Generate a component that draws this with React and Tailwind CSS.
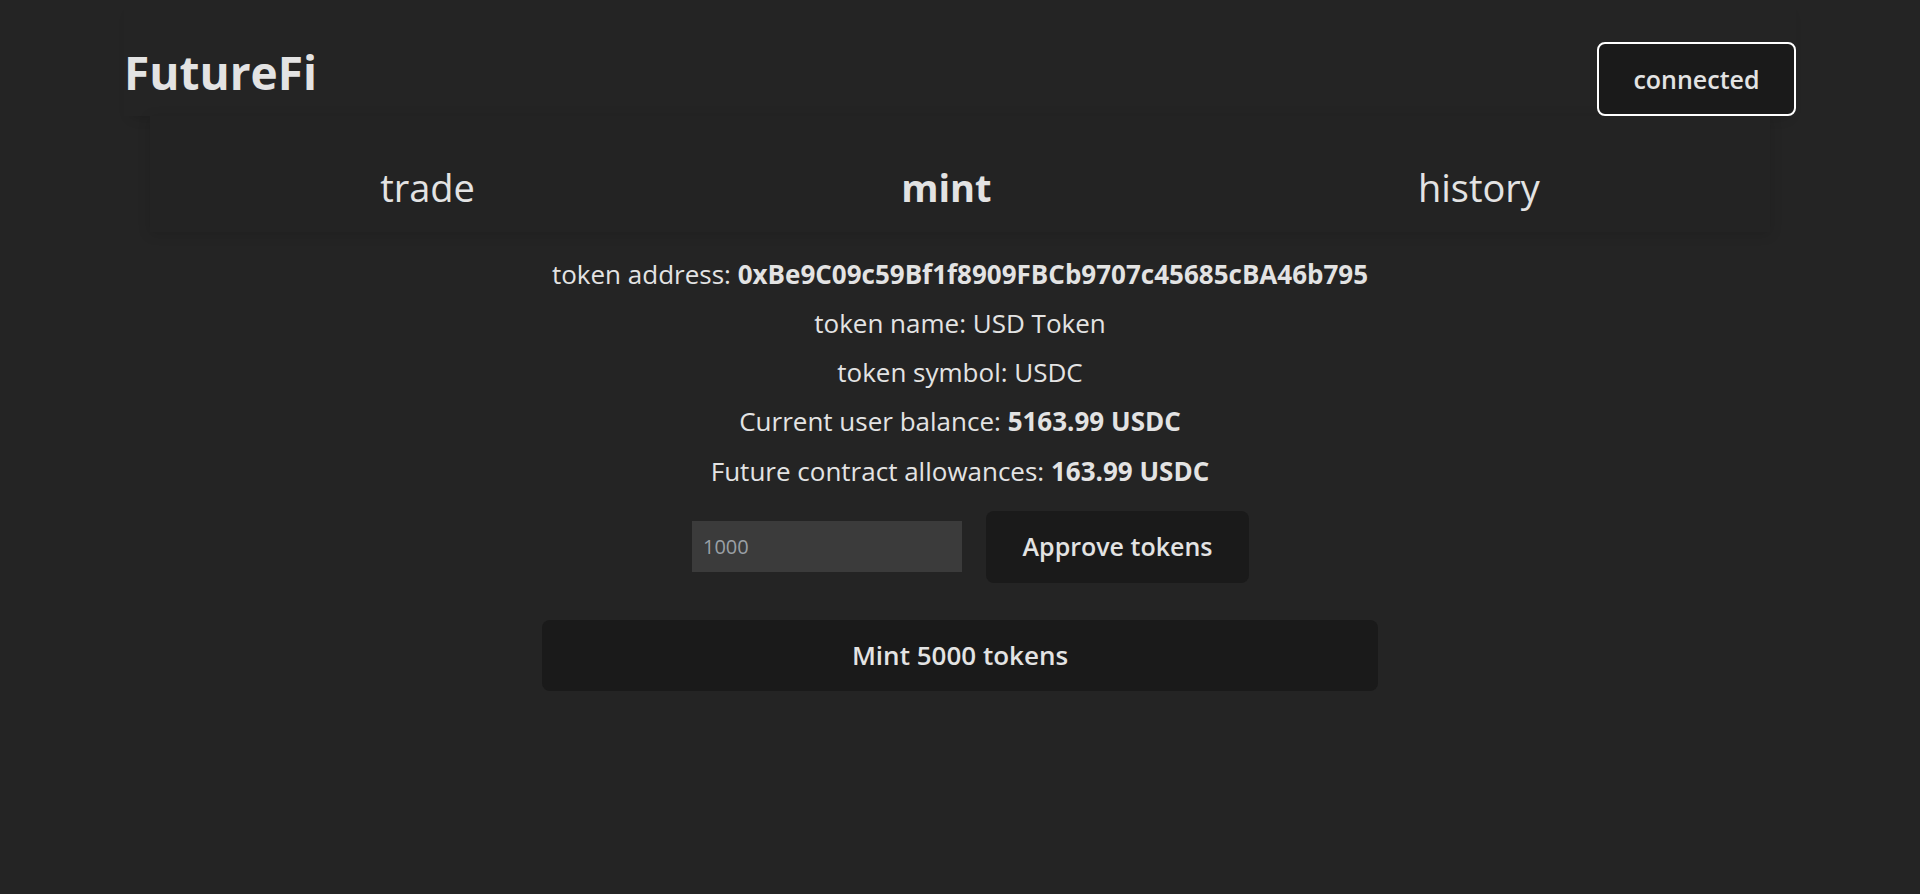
import React, { useState } from 'react';

const tabs = ['trade', 'mint', 'history'];

function Header() {
  return (
    <header className="mx-[124px] h-[116px] flex justify-between items-start shadow-[0_8px_12px_-8px_rgba(0,0,0,0.22)]">
      <h1 className="mt-[49px] text-[46px] font-bold leading-none text-[#e3e3e3]">FutureFi</h1>
      <button className="mt-[42px] w-[199px] h-[74px] pt-[2px] rounded-lg border-2 border-white bg-[#1a1a1a] text-[25px] font-semibold text-[#e3e3e3]">
        connected
      </button>
    </header>
  );
}

function Nav({ active, setActive }) {
  return (
    <nav className="mx-[150px] h-[116px] px-[17px] flex justify-around items-start bg-[#232323] shadow-[0_2px_12px_rgba(0,0,0,0.14)]">
      {tabs.map((t) => (
        <button
          key={t}
          onClick={() => setActive(t)}
          className={`mt-[52px] text-[38px] leading-none text-[#e3e3e3] ${active === t ? 'font-bold' : 'font-normal'}`}
        >
          {t}
        </button>
      ))}
    </nav>
  );
}

function MintPanel() {
  const [amount, setAmount] = useState('');

  return (
    <div className="flex flex-col items-center pt-[17.5px] text-[26px] leading-[49.3px] text-[#e3e3e3]">
      <p>
        token address: <b className="font-bold">0xBe9C09c59Bf1f8909FBCb9707c45685cBA46b795</b>
      </p>
      <p>token name: USD Token</p>
      <p>token symbol: USDC</p>
      <p>
        Current user balance: <b className="font-bold">5163.99 USDC</b>
      </p>
      <p>
        Future contract allowances: <b className="font-bold">163.99 USDC</b>
      </p>

      <div className="mt-[15px] ml-[21px] flex items-center gap-[24px]">
        <input
          value={amount}
          onChange={(e) => setAmount(e.target.value)}
          placeholder="1000"
          className="w-[270px] h-[51px] px-[11px] bg-[#3b3b3b] text-[20px] leading-none text-[#e3e3e3] placeholder:text-[#9aa0a6] outline-none"
        />
        <button className="w-[263px] h-[72px] rounded-lg bg-[#1a1a1a] text-[25px] font-semibold leading-none">
          Approve tokens
        </button>
      </div>

      <button className="mt-[37px] w-[836px] h-[71px] rounded-lg bg-[#1a1a1a] text-[26px] font-semibold leading-none">
        Mint 5000 tokens
      </button>
    </div>
  );
}

export default function App() {
  const [active, setActive] = useState('mint');

  return (
    <div className="min-h-screen bg-[#242424] font-['Open_Sans',sans-serif]">
      <Header />
      <Nav active={active} setActive={setActive} />
      <MintPanel />
    </div>
  );
}
